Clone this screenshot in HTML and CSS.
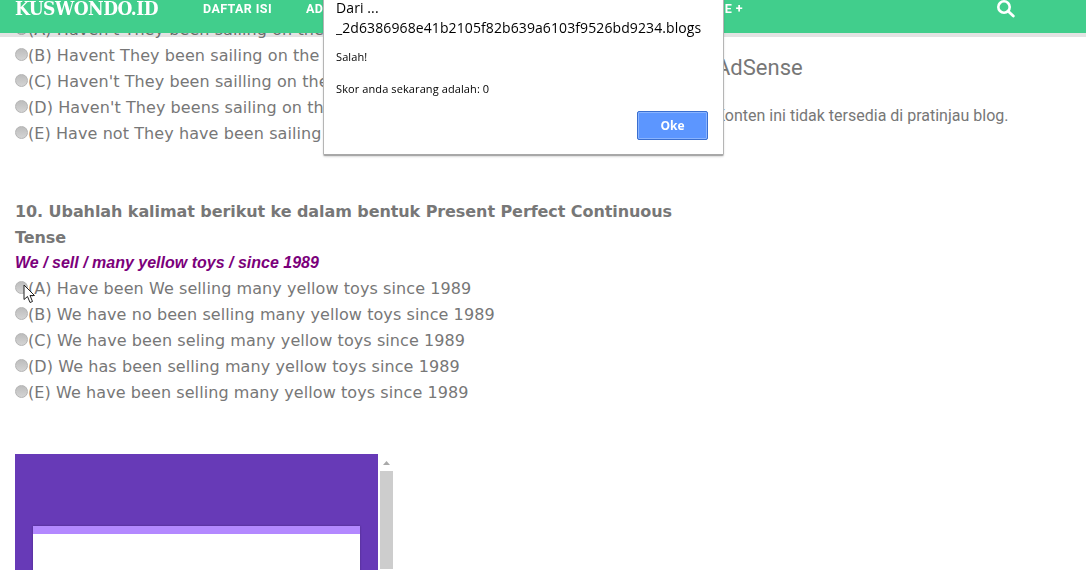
FILE: index.html
```html
<!DOCTYPE html>
<html lang="en">

<head>
	<meta charset="UTF-8">
	<title>Kuswondo.id</title>
	<link rel="stylesheet" href="styles.css">
</head>

<body>
	<header class="topbar">
		<a class="logo">KUSWONDO.ID</a>
		<nav class="nav">
			<a class="nav-item">DAFTAR ISI</a>
			<a class="nav-item">AD</a>
			<a class="nav-item nav-last">E +</a>
		</nav>
		<svg class="search-icon" width="18" height="18" viewBox="0 0 18 18">
			<circle cx="7" cy="7" r="5.7" fill="none" stroke="#fff" stroke-width="2.6" />
			<path d="M11.2 11.2 L16.3 16" stroke="#fff" stroke-width="2.8" stroke-linecap="round" />
		</svg>
	</header>

	<div class="page">
		<main class="main">
			<div class="options">
				<label class="option"><input type="radio" name="q9">(A) Haven't They been sailing on the</label>
				<label class="option"><input type="radio" name="q9">(B) Havent They been sailing on the</label>
				<label class="option"><input type="radio" name="q9">(C) Haven't They been sailling on the</label>
				<label class="option"><input type="radio" name="q9">(D) Haven't They beens sailing on the</label>
				<label class="option"><input type="radio" name="q9">(E) Have not They have been sailing</label>
			</div>

			<h3 class="question">10. Ubahlah kalimat berikut ke dalam bentuk Present Perfect Continuous Tense</h3>
			<p class="prompt">We / sell / many yellow toys / since 1989</p>
			<div class="options">
				<label class="option"><input type="radio" name="q10">(A) Have been We selling many yellow toys since 1989</label>
				<label class="option"><input type="radio" name="q10">(B) We have no been selling many yellow toys since 1989</label>
				<label class="option"><input type="radio" name="q10">(C) We have been seling many yellow toys since 1989</label>
				<label class="option"><input type="radio" name="q10">(D) We has been selling many yellow toys since 1989</label>
				<label class="option"><input type="radio" name="q10">(E) We have been selling many yellow toys since 1989</label>
			</div>

			<div class="embed">
				<div class="embed-frame">
					<div class="embed-card"></div>
				</div>
				<div class="scrollbar">
					<svg class="scroll-arrow" width="7" height="4" viewBox="0 0 7 4">
						<path d="M3.5 0 L7 4 L0 4 Z" fill="#a9a9a9" />
					</svg>
					<div class="scroll-thumb"></div>
				</div>
			</div>
		</main>

		<aside class="side">
			<h2 class="side-title">AdSense</h2>
			<p class="side-text">Konten ini tidak tersedia di pratinjau blog.</p>
		</aside>
	</div>

	<div class="dialog">
		<div class="dialog-from">Dari ...<br>_2d6386968e41b2105f82b639a6103f9526bd9234.blogs</div>
		<p class="dialog-msg">Salah!</p>
		<p class="dialog-msg">Skor anda sekarang adalah: 0</p>
		<div class="dialog-actions">
			<button class="ok-btn" type="button">Oke</button>
		</div>
	</div>

	<svg class="cursor" width="14" height="20" viewBox="0 0 14 20">
		<path d="M1 1 L1 15.5 L4.5 12.5 L7 18.5 L9.5 17.5 L7 11.5 L11.5 11.5 Z" fill="#fff" stroke="#222" stroke-width="1" />
	</svg>
</body>

</html>
```

FILE: styles.css
```css
* {
	box-sizing: border-box;
}

html,
body {
	height: 100%;
}

body {
	margin: 0;
	background-color: #fff;
	color: #777;
	overflow: hidden;
}

.topbar {
	position: fixed;
	top: 0;
	left: 0;
	right: 0;
	height: 37px;
	display: flex;
	align-items: flex-start;
	background-color: #41ce8c;
	background-clip: padding-box;
	border-bottom: 4px solid rgba(0, 0, 0, 0.11);
	padding-left: 15px;
	z-index: 2;
}

.logo {
	width: 188px;
	margin-top: -3px;
	font-family: "DejaVu Serif Condensed", "DejaVu Serif", serif;
	font-stretch: condensed;
	font-size: 19px;
	font-weight: 700;
	line-height: 22px;
	letter-spacing: -0.5px;
	color: #fff;
}

.nav {
	display: flex;
	width: 540px;
	height: 17px;
}

.nav-item {
	margin-right: 34px;
	font-family: Roboto, sans-serif;
	font-size: 12.5px;
	font-weight: 700;
	line-height: 17px;
	letter-spacing: 0.4px;
	color: #fff;
	white-space: nowrap;
}

.nav-last {
	margin-left: auto;
	margin-right: 0;
}

.search-icon {
	margin-left: 254px;
	flex: none;
}

.page {
	display: flex;
	padding: 16px 0 0 15px;
}

.main {
	width: 665px;
	flex: none;
}

.options {
	display: flex;
	flex-direction: column;
}

.option {
	display: flex;
	align-items: center;
	height: 26px;
	font-family: "DejaVu Sans", Verdana, sans-serif;
	font-size: 16px;
	letter-spacing: 0.08px;
	white-space: nowrap;
}

.option input {
	appearance: none;
	width: 13px;
	height: 13px;
	margin: -1px 0 0 0;
	flex: none;
	border-radius: 50%;
	border: 1px solid #b4b4b4;
	background: linear-gradient(#bdbdbd, #d4d4d4);
}

.question {
	margin: 53px 0 0;
	font-family: "DejaVu Sans", Verdana, sans-serif;
	font-size: 16px;
	font-weight: 700;
	letter-spacing: -0.08px;
	line-height: 26px;
}

.prompt {
	margin: 0;
	font-family: "Liberation Sans", Arial, sans-serif;
	font-size: 16px;
	font-weight: 700;
	font-style: italic;
	line-height: 24px;
	color: #7b007b;
}

.embed {
	display: flex;
	width: 378px;
	margin-top: 49px;
	height: 200px;
}

.embed-frame {
	width: 363px;
	flex: none;
	background-color: #673ab7;
	padding: 72px 18px 0;
}

.embed-card {
	height: 100%;
	background-color: #fff;
	border-top: 8px solid #b388ff;
	box-shadow: 0 0 2px rgba(0, 0, 0, 0.3);
}

.scrollbar {
	width: 15px;
	flex: none;
	display: flex;
	flex-direction: column;
	align-items: center;
	padding: 7px 0 0 2px;
}

.scroll-arrow {
	flex: none;
}

.scroll-thumb {
	width: 13px;
	height: 98px;
	margin-top: 6px;
	background-color: #cdcdcd;
}

.side {
	margin-left: 43px;
	width: 363px;
	flex: none;
	white-space: nowrap;
	font-family: Roboto, sans-serif;
}

.side-title {
	margin: 39px 0 0 -7px;
	font-size: 22px;
	font-weight: 400;
	line-height: 26px;
}

.side-text {
	margin: 25px 0 0 -8px;
	font-size: 16px;
	line-height: 20px;
}

.dialog {
	position: fixed;
	top: -10px;
	left: 323px;
	width: 401px;
	height: 166px;
	padding: 7px 12px 0;
	background-color: #fff;
	border: 1px solid #b5b5b5;
	border-bottom: 2px solid #a8a8a8;
	border-radius: 2px;
	box-shadow: 0 1px 2px rgba(0, 0, 0, 0.15);
	color: #000;
	font-family: "Open Sans", sans-serif;
	z-index: 3;
}

.dialog-from {
	font-size: 14px;
	letter-spacing: 0.1px;
	line-height: 20px;
}

.dialog-msg {
	margin: 9px 0 0;
	font-size: 11px;
	letter-spacing: 0.1px;
	line-height: 19px;
}

.dialog-msg + .dialog-msg {
	margin-top: 13px;
}

.dialog-actions {
	display: flex;
	justify-content: flex-end;
	margin-top: 13px;
	padding-right: 3px;
}

.ok-btn {
	width: 71px;
	height: 29px;
	padding: 0;
	border: 1px solid #3a6fd0;
	border-radius: 2px;
	box-shadow: inset 0 0 0 1px #8ab4ff;
	background-color: #5c96ff;
	color: #fff;
	font-family: "Open Sans", sans-serif;
	font-size: 12px;
	font-weight: 700;
}

.cursor {
	position: fixed;
	left: 23px;
	top: 284px;
	z-index: 4;
}
```
